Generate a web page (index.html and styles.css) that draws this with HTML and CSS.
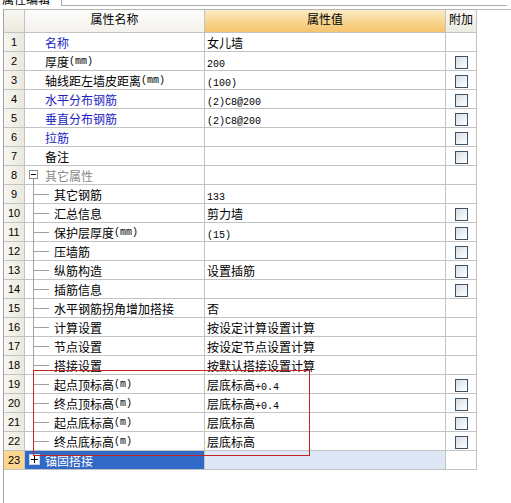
FILE: index.html
```html
<!DOCTYPE html>
<html>
<head>
<meta charset="utf-8">
<link rel="stylesheet" href="styles.css">
</head>
<body>
<div class="tabs">
  <div class="tab"><span>属性编辑</span></div>
  <div class="tabbox"></div>
</div>
<div class="panel">
  <div class="grid">
    <div class="hd h-num"></div>
    <div class="hd h-name">属性名称</div>
    <div class="hd h-val">属性值</div>
    <div class="hd h-att">附加</div>

    <div class="num">1</div>
    <div class="name blue"><span class="ind"></span>名称</div>
    <div class="val">女儿墙</div>
    <div class="att"></div>

    <div class="num">2</div>
    <div class="name"><span class="ind"></span>厚度<span class="a">(mm)</span></div>
    <div class="val"><span class="a">200</span></div>
    <div class="att"><span class="cb"></span></div>

    <div class="num">3</div>
    <div class="name"><span class="ind"></span>轴线距左墙皮距离<span class="a">(mm)</span></div>
    <div class="val"><span class="a">(100)</span></div>
    <div class="att"><span class="cb"></span></div>

    <div class="num">4</div>
    <div class="name blue"><span class="ind"></span>水平分布钢筋</div>
    <div class="val"><span class="a">(2)C8@200</span></div>
    <div class="att"><span class="cb"></span></div>

    <div class="num">5</div>
    <div class="name blue"><span class="ind"></span>垂直分布钢筋</div>
    <div class="val"><span class="a">(2)C8@200</span></div>
    <div class="att"><span class="cb"></span></div>

    <div class="num">6</div>
    <div class="name blue"><span class="ind"></span>拉筋</div>
    <div class="val"></div>
    <div class="att"><span class="cb"></span></div>

    <div class="num">7</div>
    <div class="name"><span class="ind"></span>备注</div>
    <div class="val"></div>
    <div class="att"><span class="cb"></span></div>

    <div class="num">8</div>
    <div class="name grey"><span class="exp open"><span class="box minus"></span></span>其它属性</div>
    <div class="val"></div>
    <div class="att"></div>

    <div class="num">9</div>
    <div class="name"><span class="tree"></span>其它钢筋</div>
    <div class="val"><span class="a">133</span></div>
    <div class="att"></div>

    <div class="num">10</div>
    <div class="name"><span class="tree"></span>汇总信息</div>
    <div class="val">剪力墙</div>
    <div class="att"><span class="cb"></span></div>

    <div class="num">11</div>
    <div class="name"><span class="tree"></span>保护层厚度<span class="a">(mm)</span></div>
    <div class="val"><span class="a">(15)</span></div>
    <div class="att"><span class="cb"></span></div>

    <div class="num">12</div>
    <div class="name"><span class="tree"></span>压墙筋</div>
    <div class="val"></div>
    <div class="att"><span class="cb"></span></div>

    <div class="num">13</div>
    <div class="name"><span class="tree"></span>纵筋构造</div>
    <div class="val">设置插筋</div>
    <div class="att"><span class="cb"></span></div>

    <div class="num">14</div>
    <div class="name"><span class="tree"></span>插筋信息</div>
    <div class="val"></div>
    <div class="att"><span class="cb"></span></div>

    <div class="num">15</div>
    <div class="name"><span class="tree"></span>水平钢筋拐角增加搭接</div>
    <div class="val">否</div>
    <div class="att"></div>

    <div class="num">16</div>
    <div class="name"><span class="tree"></span>计算设置</div>
    <div class="val">按设定计算设置计算</div>
    <div class="att"></div>

    <div class="num">17</div>
    <div class="name"><span class="tree"></span>节点设置</div>
    <div class="val">按设定节点设置计算</div>
    <div class="att"></div>

    <div class="num">18</div>
    <div class="name"><span class="tree"></span>搭接设置</div>
    <div class="val">按默认搭接设置计算</div>
    <div class="att"></div>

    <div class="num">19</div>
    <div class="name"><span class="tree"></span>起点顶标高<span class="a">(m)</span></div>
    <div class="val">层底标高<span class="a">+0.4</span></div>
    <div class="att"><span class="cb"></span></div>

    <div class="num">20</div>
    <div class="name"><span class="tree"></span>终点顶标高<span class="a">(m)</span></div>
    <div class="val">层底标高<span class="a">+0.4</span></div>
    <div class="att"><span class="cb"></span></div>

    <div class="num">21</div>
    <div class="name"><span class="tree"></span>起点底标高<span class="a">(m)</span></div>
    <div class="val">层底标高</div>
    <div class="att"><span class="cb"></span></div>

    <div class="num">22</div>
    <div class="name"><span class="tree last"></span>终点底标高<span class="a">(m)</span></div>
    <div class="val">层底标高</div>
    <div class="att"><span class="cb"></span></div>

    <div class="num sel">23</div>
    <div class="name sel"><span class="exp"><span class="box plus"></span></span>锚固搭接</div>
    <div class="val sel"></div>
    <div class="att"></div>
  </div>
  <div class="mark"></div>
</div>
</body>
</html>
```

FILE: styles.css
```css
html, body {
  margin: 0;
  padding: 0;
}
body {
  width: 511px;
  height: 503px;
  overflow: hidden;
  background: #ffffff;
  color: #000000;
  font-family: "Noto Sans CJK SC", sans-serif;
  font-size: 12px;
}
.tabs {
  display: flex;
  height: 9px;
}
.tab {
  width: 61px;
  height: 9px;
  overflow: hidden;
  line-height: 12px;
}
.tab span {
  display: block;
  margin-top: -7px;
  padding-left: 2px;
}
.tabbox {
  width: 445px;
  height: 5px;
  border-left: 1px solid #a7adb3;
  border-bottom: 1px solid #a7adb3;
}
.panel {
  position: relative;
  margin-left: 3px;
  height: 493px;
  border-left: 1px solid #a3a3a3;
  border-top: 1px solid #b5b5b5;
}
.grid {
  display: grid;
  grid-template-columns: 21px 180px 241px 31px;
  grid-template-rows: 23px;
  grid-auto-rows: 19px;
}
.grid > div {
  box-sizing: border-box;
  border-right: 1px solid #c3c3c3;
  border-bottom: 1px solid #c3c3c3;
  line-height: 18px;
  white-space: nowrap;
}
.hd {
  line-height: 22px;
  text-align: center;
  background: linear-gradient(#fdfdfc, #f3f2ec);
}
.h-num {
  background: linear-gradient(#f8f7f2, #eceadf);
}
.h-val {
  background: linear-gradient(#fcecc8, #f8d48e 55%, #f5c46c);
}
.h-att {
  background: linear-gradient(#f9f8f3, #ecebe2);
}
.num {
  text-align: center;
  font-family: "Liberation Sans", sans-serif;
  font-size: 11px;
  background: linear-gradient(90deg, #f7f6f0, #ebe9de);
}
.num.sel {
  background: #fcd68e;
}
.name {
  display: flex;
  align-items: stretch;
  padding-top: 1px;
}
.name.blue { color: #1c1cc4; }
.name.grey { color: #8a8a8a; }
.name.sel {
  background: #3169c6;
  color: #ffffff;
}
.val {
  padding-left: 2px;
  padding-top: 1px;
}
.val.sel {
  background: #dde7f5;
}
.att {
  padding-top: 4px;
  padding-left: 9px;
}
.a {
  font-family: "Liberation Mono", monospace;
  font-size: 10px;
}
.ind {
  width: 20px;
  flex: none;
}
.tree {
  width: 29px;
  flex: none;
  position: relative;
}
.tree::before {
  content: "";
  position: absolute;
  left: 8px;
  top: -2px;
  bottom: -1px;
  border-left: 1px solid #a0a0a0;
}
.tree.last::before {
  bottom: 50%;
}
.tree::after {
  content: "";
  position: absolute;
  left: 8px;
  width: 16px;
  top: 50%;
  margin-top: -1px;
  border-top: 1px solid #a0a0a0;
}
.exp {
  width: 20px;
  flex: none;
  position: relative;
}
.exp.open::after {
  content: "";
  position: absolute;
  left: 8px;
  top: 12px;
  bottom: -1px;
  border-left: 1px solid #a0a0a0;
}
.box {
  position: absolute;
  left: 4px;
  top: 3px;
  width: 9px;
  height: 9px;
  border: 1px solid #8d8d8d;
  background: #ffffff;
  box-sizing: border-box;
}
.sel .box {
  width: 11px;
  height: 11px;
  top: 2px;
  border-color: #c9d3e2;
}
.box::before {
  content: "";
  position: absolute;
  left: 1px;
  right: 1px;
  top: 50%;
  margin-top: -0.5px;
  height: 1px;
  background: #000000;
}
.box.plus::after {
  content: "";
  position: absolute;
  top: 1px;
  bottom: 1px;
  left: 50%;
  margin-left: -0.5px;
  width: 1px;
  background: #000000;
}
.cb {
  display: block;
  width: 13px;
  height: 13px;
  box-sizing: border-box;
  border: 1px solid #3c5266;
  background: linear-gradient(135deg, #d8dde3, #f4f6f8 70%, #ffffff);
}
.mark {
  position: absolute;
  left: 29px;
  top: 360px;
  width: 277px;
  height: 86px;
  box-sizing: border-box;
  border: 1px solid #c42424;
}
```
